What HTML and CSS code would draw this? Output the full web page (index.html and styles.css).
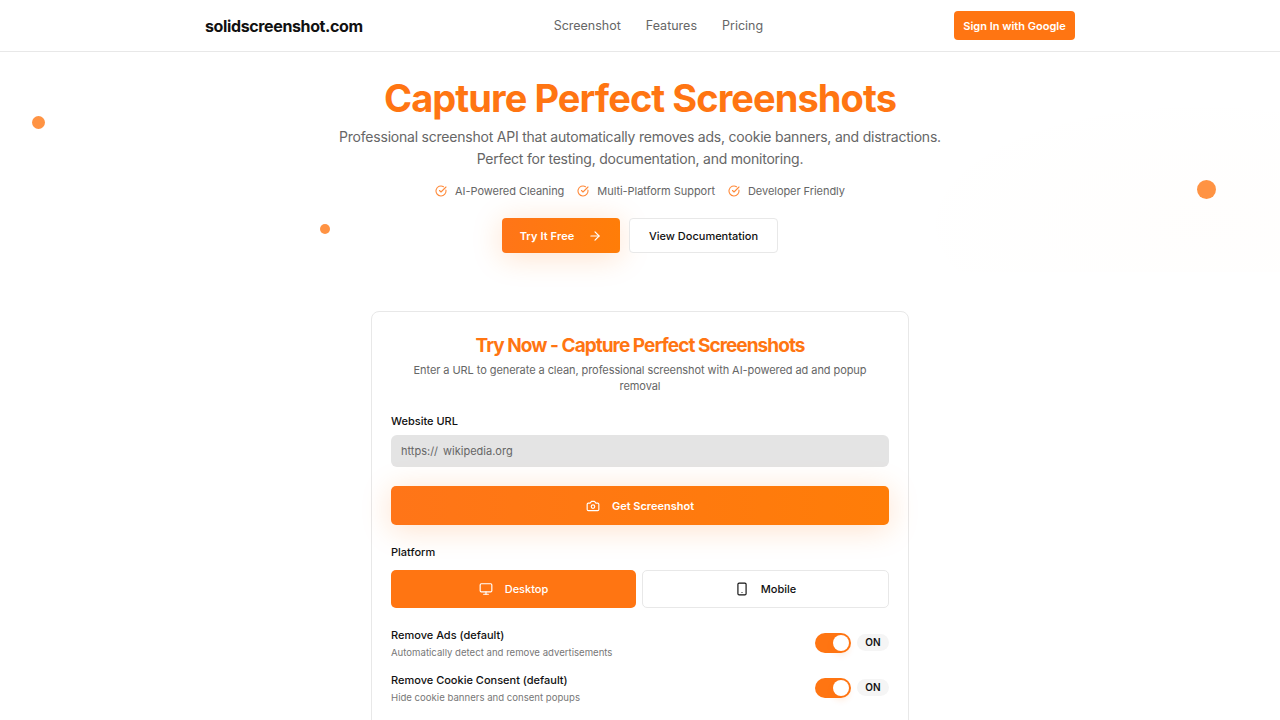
FILE: index.html
```html
<!DOCTYPE html>
<html lang="en">
<head>
    <meta charset="UTF-8">
    <meta name="viewport" content="width=device-width, initial-scale=1.0">
    <title>solidscreenshot.com</title>
    <link rel="stylesheet" href="styles.css">
</head>
<body>
    <!-- Top navigation -->
    <header class="navbar">
        <div class="navbar-inner">
            <a class="logo" href="#">solidscreenshot.com</a>
            <nav class="nav-links">
                <a href="#">Screenshot</a>
                <a href="#">Features</a>
                <a href="#">Pricing</a>
            </nav>
            <button class="btn-signin">Sign In with Google</button>
        </div>
    </header>

    <!-- Hero -->
    <section class="hero">
        <span class="hero-glow"></span>
        <span class="dot dot-one"></span>
        <span class="dot dot-two"></span>
        <span class="dot dot-three"></span>

        <h1>Capture Perfect Screenshots</h1>
        <p class="hero-sub">Professional screenshot API that automatically removes ads, cookie banners, and distractions.<br>Perfect for testing, documentation, and monitoring.</p>
        <ul class="perks">
            <li>
                <svg class="perk-icon" viewBox="0 0 24 24"><path d="M21.8 10A10 10 0 1 1 17 3.3"/><path d="m9 11 3 3L22 4"/></svg>
                AI-Powered Cleaning
            </li>
            <li>
                <svg class="perk-icon" viewBox="0 0 24 24"><path d="M21.8 10A10 10 0 1 1 17 3.3"/><path d="m9 11 3 3L22 4"/></svg>
                Multi-Platform Support
            </li>
            <li>
                <svg class="perk-icon" viewBox="0 0 24 24"><path d="M21.8 10A10 10 0 1 1 17 3.3"/><path d="m9 11 3 3L22 4"/></svg>
                Developer Friendly
            </li>
        </ul>
        <div class="hero-actions">
            <button class="btn-try">
                Try It Free
                <svg class="icon" viewBox="0 0 24 24"><path d="M5 12h14"/><path d="m12 5 7 7-7 7"/></svg>
            </button>
            <button class="btn-docs">View Documentation</button>
        </div>
    </section>

    <!-- Try now card -->
    <section class="card">
        <h2>Try Now - Capture Perfect Screenshots</h2>
        <p class="card-sub">Enter a URL to generate a clean, professional screenshot with AI-powered ad and popup removal</p>

        <label class="field-label" for="url">Website URL</label>
        <div class="url-field">
            <span class="url-prefix">https://</span>
            <input id="url" type="text" value="wikipedia.org">
        </div>

        <button class="btn-capture">
            <svg class="icon" viewBox="0 0 24 24"><path d="M14.5 4h-5L7 7H4a2 2 0 0 0-2 2v9a2 2 0 0 0 2 2h16a2 2 0 0 0 2-2V9a2 2 0 0 0-2-2h-3z"/><circle cx="12" cy="13" r="3"/></svg>
            Get Screenshot
        </button>

        <div class="field-label">Platform</div>
        <div class="platforms">
            <button class="platform active">
                <svg class="icon" viewBox="0 0 24 24"><rect x="2" y="3" width="20" height="14" rx="2"/><path d="M8 21h8"/><path d="M12 17v4"/></svg>
                Desktop
            </button>
            <button class="platform">
                <svg class="icon" viewBox="0 0 24 24"><rect x="5" y="2" width="14" height="20" rx="2"/><path d="M12 18h.01"/></svg>
                Mobile
            </button>
        </div>

        <div class="option">
            <div>
                <div class="option-title">Remove Ads (default)</div>
                <div class="option-desc">Automatically detect and remove advertisements</div>
            </div>
            <div class="toggle-wrap">
                <span class="toggle"><span class="knob"></span></span>
                <span class="toggle-state">ON</span>
            </div>
        </div>
        <div class="option">
            <div>
                <div class="option-title">Remove Cookie Consent (default)</div>
                <div class="option-desc">Hide cookie banners and consent popups</div>
            </div>
            <div class="toggle-wrap">
                <span class="toggle"><span class="knob"></span></span>
                <span class="toggle-state">ON</span>
            </div>
        </div>
    </section>
</body>
</html>
```

FILE: styles.css
```css
* {
    box-sizing: border-box;
}
html, body {
    height: 720px;
    overflow: hidden;
}
body {
    font-family: 'Inter', sans-serif;
    margin: 0;
    padding: 0;
    background-color: #fff;
    color: #111;
}
button {
    font-family: inherit;
    cursor: pointer;
}
.icon {
    width: 14px;
    height: 14px;
    fill: none;
    stroke: currentColor;
    stroke-width: 2;
    stroke-linecap: round;
    stroke-linejoin: round;
}

/* navbar */
.navbar {
    height: 52px;
    border-bottom: 1px solid #e8e8e8;
    background: #fff;
}
.navbar-inner {
    width: 870px;
    height: 51px;
    margin: 0 auto;
    display: flex;
    align-items: center;
    justify-content: space-between;
}
.logo {
    font-size: 16px;
    font-weight: 700;
    letter-spacing: -0.37px;
    color: #111;
    text-decoration: none;
}
.nav-links {
    display: flex;
    gap: 25px;
}
.nav-links a {
    font-size: 12.5px;
    color: #666;
    text-decoration: none;
}
.btn-signin {
    height: 29px;
    width: 121px;
    padding: 0;
    background: #ff7512;
    color: #fff;
    border: none;
    border-radius: 4px;
    font-size: 11px;
    font-weight: 600;
}

/* hero */
.hero {
    position: relative;
    height: 259px;
    padding-top: 20px;
    text-align: center;
}
.hero h1 {
    margin: 0;
    font-size: 38px;
    line-height: 52px;
    font-weight: 700;
    letter-spacing: -0.93px;
    color: #ff7512;
}
.hero-sub {
    margin: 2px 0 0;
    font-size: 14px;
    line-height: 22.4px;
    letter-spacing: -0.22px;
    color: #666;
}
.perks {
    list-style: none;
    margin: 11px 0 0;
    padding: 0;
    display: flex;
    justify-content: center;
    gap: 13px;
}
.perks li {
    display: flex;
    align-items: center;
    gap: 8px;
    font-size: 11px;
    line-height: 18px;
    letter-spacing: -0.05px;
    color: #666;
}
.perk-icon {
    width: 12px;
    height: 12px;
    fill: none;
    stroke: #ff8a3a;
    stroke-width: 2.2;
    stroke-linecap: round;
    stroke-linejoin: round;
}
.hero-actions {
    margin-top: 18px;
    display: flex;
    justify-content: center;
    gap: 9px;
}
.btn-try, .btn-docs {
    height: 35px;
    padding: 1px 0 0;
    border-radius: 4px;
    font-size: 11px;
    font-weight: 600;
    display: flex;
    align-items: center;
}
.btn-try {
    width: 118px;
    justify-content: center;
    gap: 14px;
    background: linear-gradient(90deg, #ff7518, #ff7d08);
    color: #fff;
    border: none;
    letter-spacing: 0.1px;
    box-shadow: 0 4px 30px rgba(255, 117, 18, 0.22);
}
.btn-docs {
    width: 149px;
    justify-content: center;
    background: #fff;
    color: #111;
    border: 1px solid #e8e8e8;
    font-weight: 500;
}
.dot {
    position: absolute;
    border-radius: 50%;
    background: #ff9343;
}
.dot-one {
    left: 32px;
    top: 64px;
    width: 13px;
    height: 13px;
}
.dot-two {
    left: 320px;
    top: 172px;
    width: 10px;
    height: 10px;
}
.dot-three {
    left: 1197px;
    top: 128px;
    width: 19px;
    height: 19px;
}
.hero-glow {
    position: absolute;
    right: 0;
    top: 30px;
    width: 400px;
    height: 190px;
    background: radial-gradient(ellipse at 80% 75%, rgba(255, 140, 60, 0.012), rgba(255, 140, 60, 0) 70%);
    pointer-events: none;
}

/* card */
.card {
    position: relative;
    width: 538px;
    margin: 0 auto;
    padding: 21px 19px 26px;
    background: #fff;
    border: 1px solid #e8e8e8;
    border-radius: 8px;
}
.card h2 {
    margin: 0;
    text-align: center;
    font-size: 19px;
    line-height: 26px;
    font-weight: 700;
    letter-spacing: -0.95px;
    color: #ff7512;
}
.card-sub {
    margin: 3px 0 0;
    padding: 0 16px;
    text-align: center;
    font-size: 11px;
    line-height: 16px;
    letter-spacing: -0.07px;
    color: #666;
}
.field-label {
    display: block;
    font-size: 11px;
    line-height: 15px;
    font-weight: 500;
    color: #111;
}
label.field-label {
    margin-top: 20px;
}
.url-field {
    margin-top: 6px;
    height: 32px;
    display: flex;
    align-items: center;
    padding: 0 10px;
    gap: 5px;
    background: #e4e4e4;
    border-radius: 6px;
}
.url-prefix, .url-field input {
    font-family: inherit;
    font-size: 11px;
    color: #666;
}
.url-field input {
    flex: 1;
    border: none;
    outline: none;
    padding: 0;
    background: transparent;
}
.btn-capture {
    margin-top: 19px;
    width: 100%;
    height: 39px;
    display: flex;
    align-items: center;
    justify-content: center;
    gap: 12px;
    background: linear-gradient(90deg, #ff7518, #ff7d08);
    color: #fff;
    border: none;
    border-radius: 5px;
    font-size: 11px;
    font-weight: 600;
    box-shadow: 0 4px 30px rgba(255, 117, 18, 0.22);
}
.btn-capture + .field-label {
    margin-top: 20px;
}
.platforms {
    margin-top: 10px;
    display: grid;
    grid-template-columns: 245px 247px;
    gap: 6px;
}
.platform {
    height: 38px;
    display: flex;
    align-items: center;
    justify-content: center;
    gap: 12px;
    background: #fff;
    color: #111;
    border: 1px solid #e8e8e8;
    border-radius: 5px;
    font-size: 11px;
    font-weight: 500;
}
.platform.active {
    background: #ff7512;
    color: #fff;
    border: none;
}
.option {
    margin-top: 12px;
    display: flex;
    align-items: center;
    justify-content: space-between;
}
.platforms + .option {
    margin-top: 19px;
}
.option-title {
    font-size: 11px;
    line-height: 16px;
    font-weight: 500;
    color: #111;
}
.option-desc {
    margin-top: 3px;
    font-size: 9.6px;
    line-height: 14px;
    color: #777;
}
.toggle-wrap {
    display: flex;
    align-items: center;
    gap: 6px;
    margin-bottom: 2px;
}
.toggle {
    width: 36px;
    height: 20px;
    padding: 2px;
    display: flex;
    justify-content: flex-end;
    background: #ff7512;
    border-radius: 10px;
}
.knob {
    width: 16px;
    height: 16px;
    background: #fff;
    border-radius: 50%;
    box-shadow: 0 4px 6px rgba(255, 117, 18, 0.15);
}
.toggle-state {
    width: 32px;
    height: 17px;
    line-height: 17px;
    text-align: center;
    background: #f5f5f5;
    border-radius: 9px;
    font-size: 10px;
    font-weight: 600;
    color: #111;
}
```
